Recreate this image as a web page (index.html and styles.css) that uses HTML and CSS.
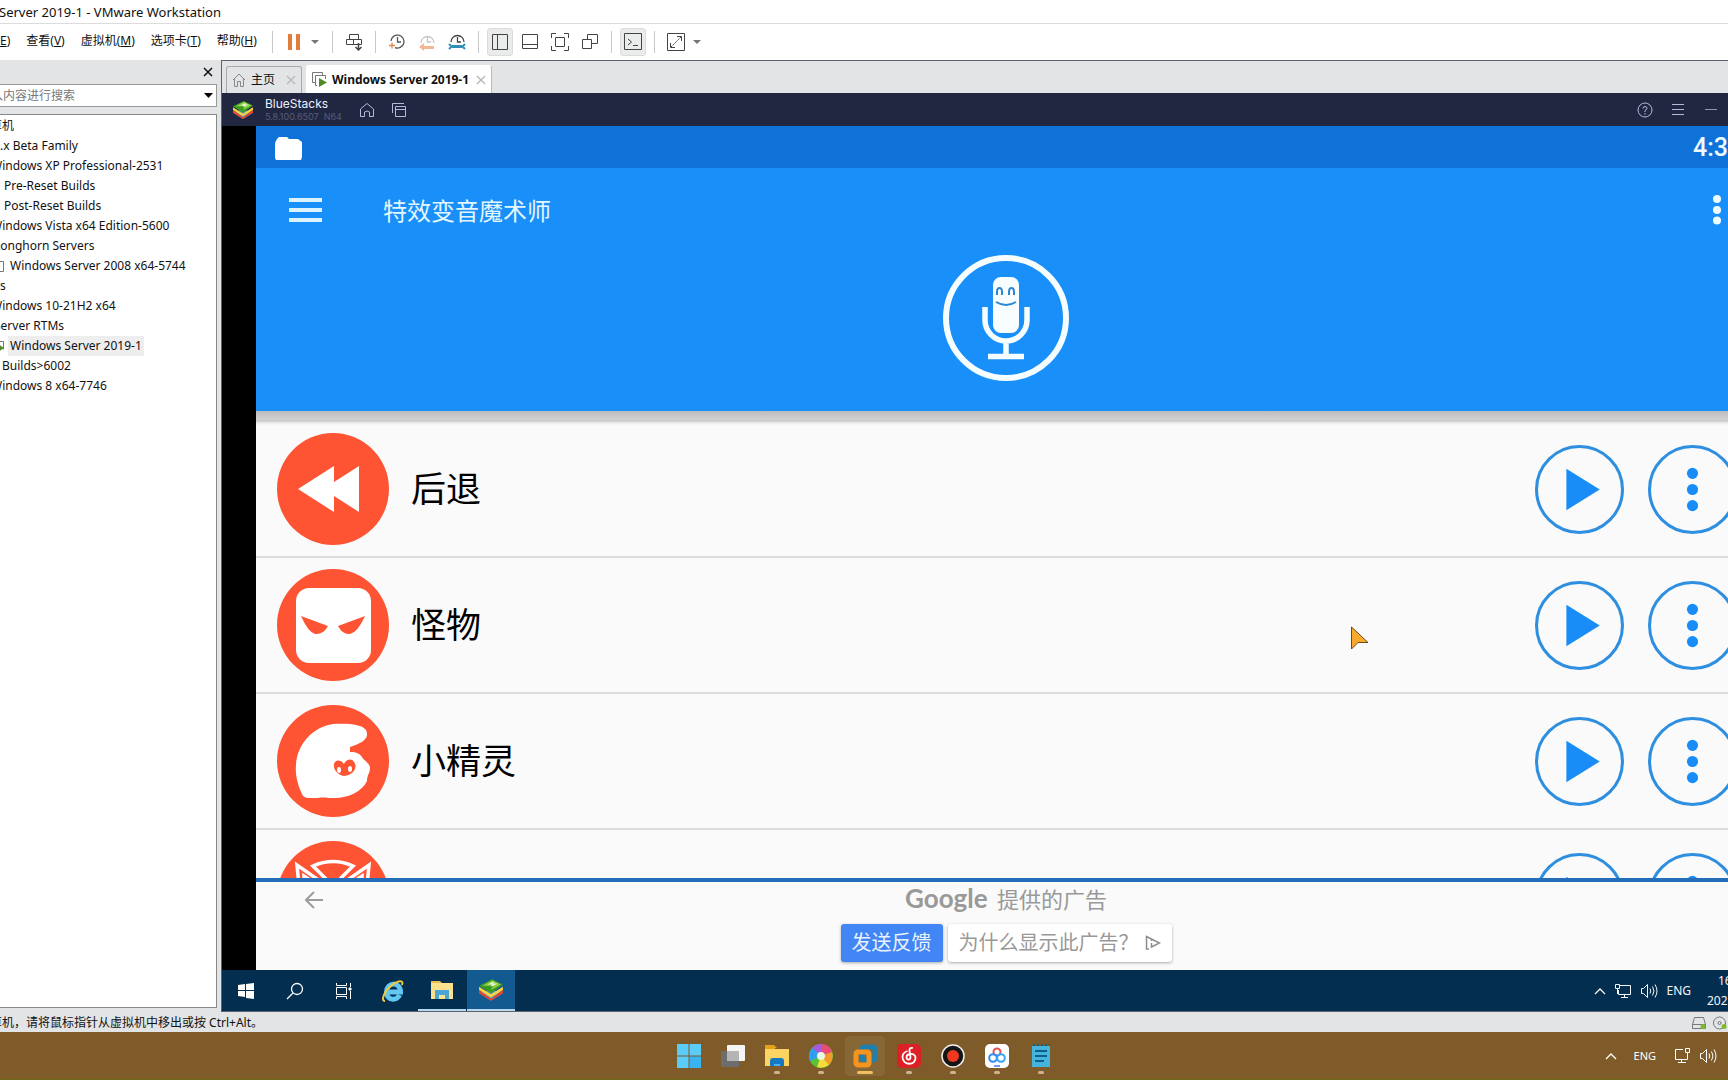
FILE: index.html
```html
<!DOCTYPE html>
<html lang="zh-CN">
<head>
<meta charset="utf-8">
<title>Server 2019-1 - VMware Workstation</title>
<link rel="stylesheet" href="styles.css">
</head>
<body>
<svg class="defs" aria-hidden="true">
  <symbol id="bluestacks" viewBox="0 0 24 22">
    <path fill="#4a9bd0" d="M1 14l11 7 11-7-11-4z"/>
    <path fill="#e8432e" d="M1 11l11 8 11-8v3l-11 7-11-7z"/>
    <path fill="#fbd43c" d="M1 8l11 7 11-7v3l-11 7-11-7z"/>
    <path fill="#3c9a1e" d="M1 7l12-6 10 5-11 8z"/>
    <path fill="#8fd14a" d="M4 7l9-5 8 4-9 5 2-4z"/>
    <path fill="#eaf8d8" d="M9 6l6-3-1 2 4 0-6 3 1-2z"/>
  </symbol>
  <symbol id="play" viewBox="0 0 88 88">
    <circle cx="44" cy="44" r="42.500" fill="none" stroke="#2e8ee0" stroke-width="3"/>
    <path fill="#188df8" d="M31 23.500v41L64 44z"/>
  </symbol>
  <symbol id="more" viewBox="0 0 88 88">
    <circle cx="44" cy="44" r="42.500" fill="none" stroke="#2e8ee0" stroke-width="3"/>
    <g fill="#188df8"><circle cx="44" cy="28" r="5.500"/><circle cx="44" cy="44" r="5.500"/><circle cx="44" cy="60" r="5.500"/></g>
  </symbol>
  <symbol id="speaker" viewBox="0 0 18 18">
    <path fill="none" stroke="currentColor" d="M1.500 6.500h2l4-4v13l-4-4h-2zM10 6.500q1.500 2.500 0 5M12.500 4.500q3 4.500 0 9M15 2.500q4 6.500 0 13"/>
  </symbol>
  <symbol id="net" viewBox="0 0 18 18">
    <path fill="none" stroke="currentColor" d="M6 3.500h10.500v9H4.500V8M10.500 12.500v3M7 15.500h7M1.500 2.500h4v4h-4zM3.500 6.500V12"/>
  </symbol>
  <symbol id="close" viewBox="0 0 10 10"><path stroke="currentColor" stroke-width="1.500" d="M1 1l8 8M9 1L1 9"/></symbol>
</svg>

<div class="desktop">
  <main class="window">
    <header class="titlebar">Server 2019-1 - VMware Workstation</header>

    <nav class="menubar">
      <div class="menus">
        <button><u>E</u>)</button>
        <button>查看(<u>V</u>)</button>
        <button>虚拟机(<u>M</u>)</button>
        <button>选项卡(<u>T</u>)</button>
        <button>帮助(<u>H</u>)</button>
      </div>
      <div class="tools">
        <i class="sep"></i>
        <button class="tool" aria-label="暂停"><svg width="20" height="20"><path fill="#e07c3c" d="M4 2h4v16H4zM12 2h4v16h-4z"/></svg></button>
        <button class="caret" aria-label="电源选项"><svg width="8" height="4"><path fill="#777" d="M0 0h8L4 4z"/></svg></button>
        <i class="sep"></i>
        <button class="tool" aria-label="发送"><svg width="20" height="20" fill="none" stroke="#444"><path d="M5.500 7.500v-5h9v5M2.500 7.500h15v5h-15zM9.500 7.500v5"/><path stroke-width="1.500" d="M14.500 11v7M11.500 15l3 3 3-3"/></svg></button>
        <i class="sep"></i>
        <button class="tool" aria-label="拍摄快照"><svg width="20" height="20" fill="none" stroke="#555" stroke-width="1.300"><path d="M4 9a6.500 6.500 0 1 1 4 6.600M10.500 5v5H14"/><path stroke="#e08a4c" d="M2 13.500h6M5 10.500v6"/></svg></button>
        <button class="tool" aria-label="恢复快照" disabled><svg width="20" height="20" fill="none" stroke="#c8c8c8" stroke-width="1.300"><path d="M4 11a6.500 6.500 0 1 1 13 0M10.500 5v5H14"/><path fill="#f3b793" stroke="none" d="M2 15l5-4v3h10v3H7v2z"/></svg></button>
        <button class="tool" aria-label="管理快照"><svg width="20" height="20" fill="none" stroke="#444" stroke-width="1.300"><path d="M4 10a6.500 6.500 0 1 1 13 0M10.500 5v5H14"/><path stroke="#2e8fb8" stroke-width="3" d="M5 14.500h10"/><path stroke="#2e8fb8" stroke-width="2" d="M2 12l2.500 2.500L2 17M18 12l-2.500 2.500L18 17"/></svg></button>
        <i class="sep"></i>
        <button class="tool on" aria-label="显示库"><svg width="20" height="20" fill="none" stroke="#444"><path d="M2.500 2.500h15v15h-15zM7.500 2.500v15"/></svg></button>
        <button class="tool" aria-label="缩略图栏"><svg width="20" height="20" fill="none" stroke="#444"><path d="M2.500 2.500h15v14h-15zM2.500 12.500h15"/></svg></button>
        <button class="tool" aria-label="全屏"><svg width="20" height="20" fill="none" stroke="#444"><path d="M5.500 5.500h9v9h-9zM1.500 6V1.500H6M14 1.500h4.500V6M18.500 14v4.500H14M6 18.500H1.500V14"/></svg></button>
        <button class="tool" aria-label="Unity"><svg width="20" height="20" fill="none" stroke="#444"><path d="M2.500 7.500h9v9h-9zM7.500 7.500v-5h10v9h-6"/></svg></button>
        <i class="sep"></i>
        <button class="tool on" aria-label="控制台"><svg width="20" height="20" fill="none" stroke="#444"><path d="M1.500 1.500h17v16h-17zM5 7l3.500 3L5 13M10 13.500h5"/></svg></button>
        <i class="sep"></i>
        <button class="tool" aria-label="拉伸"><svg width="20" height="20" fill="none" stroke="#444"><path d="M1.500 1.500h17v17h-17z"/><path stroke-dasharray="2 1" d="M5 15L15 5"/><path d="M11 4.500h4.500V9M4.500 11v4.500H9"/></svg></button>
        <button class="caret" aria-label="拉伸选项"><svg width="8" height="4"><path fill="#777" d="M0 0h8L4 4z"/></svg></button>
      </div>
    </nav>

    <div class="body">
      <aside class="library">
        <div class="library-head"><button aria-label="关闭"><svg width="10" height="10"><use href="#close"/></svg></button></div>
        <div class="search">
          <input type="text" aria-label="搜索" placeholder="入内容进行搜索">
          <button aria-label="展开"><svg width="9" height="5"><path d="M0 0h9L4.500 5z"/></svg></button>
        </div>
        <ul class="tree">
          <li class="l0">算机</li>
          <li class="l3">.x Beta Family</li>
          <li class="l1">Windows XP Professional-2531</li>
          <li class="l4">Pre-Reset Builds</li>
          <li class="l4">Post-Reset Builds</li>
          <li class="l1">Windows Vista x64 Edition-5600</li>
          <li class="l2">Longhorn Servers</li>
          <li class="l2 vm"><svg width="10" height="16" fill="none" stroke="#777"><path d="M0 3.500h9.500v10H0M0 1v3"/></svg><span>Windows Server 2008 x64-5744</span></li>
          <li class="l3">s</li>
          <li class="l1">Windows 10-21H2 x64</li>
          <li class="l2">Server RTMs</li>
          <li class="l2 vm"><svg width="10" height="16" fill="none" stroke="#777"><path d="M0 3.500h9.500v8M0 1v3"/><path fill="#4e8a2a" stroke="none" d="M4 6l6 4-6 4z"/></svg><span class="selected">Windows Server 2019-1</span></li>
          <li class="l5">Builds&gt;6002</li>
          <li class="l1">Windows 8 x64-7746</li>
        </ul>
      </aside>

      <section class="console">
        <div class="tabs">
          <div class="tab">
            <svg width="14" height="14" fill="none" stroke="#888"><path d="M1 7l6-6 6 6M2.500 6v7.500h3v-5h3v5h3V6"/></svg>
            <a href="#">主页</a>
            <button aria-label="关闭标签"><svg width="10" height="10"><use href="#close"/></svg></button>
          </div>
          <div class="tab active">
            <svg width="15" height="15" fill="none" stroke="#777"><path d="M3 10.500H.5V.5h10V3M5 13.500H3.500v-10h10V7"/><path fill="#4e8a2a" stroke="none" d="M7 6l8 4.500L7 15z"/></svg>
            <a href="#">Windows Server 2019-1</a>
            <button aria-label="关闭标签"><svg width="10" height="10"><use href="#close"/></svg></button>
          </div>
        </div>

        <div class="bs-bar">
          <svg class="bs-logo" width="22" height="20"><use href="#bluestacks"/></svg>
          <div class="bs-name"><b>BlueStacks</b><small>5.8.100.6507&nbsp; N64</small></div>
          <button aria-label="主屏幕"><svg width="16" height="16" fill="none" stroke="#b4bade"><path d="M1.500 14.500V7L8 1.500 14.500 7v7.500h-4V10q-2.500-2-5 0v4.500z"/></svg></button>
          <button aria-label="最近"><svg width="16" height="16" fill="none" stroke="#b4bade"><path d="M1.500 11V1.500H13M4.500 4.500h10v10h-10zM4.500 7.500h10"/></svg></button>
          <span class="grow"></span>
          <button aria-label="帮助"><svg width="16" height="16" fill="none" stroke="#b4bade"><circle cx="8" cy="8" r="7"/><path d="M6 6.500q0-2 2-2t2 2q0 1-2 2V10M8 11v1.500"/></svg></button>
          <button aria-label="菜单"><svg width="16" height="16" stroke="#b4bade"><path d="M2 2.500h12M2 7.500h12M2 12.500h12"/></svg></button>
          <button aria-label="最小化"><svg width="16" height="16" stroke="#8f94b5"><path d="M2 7.500h12"/></svg></button>
        </div>

        <div class="stage">
          <div class="android">
            <div class="statusbar">
              <svg width="27" height="23"><path fill="#fff" d="M0 6L2 2 4 0h8l2 2h9l4 3v15l-1 3H1l-1-2z"/></svg>
              <time>4:3</time>
            </div>
            <div class="appbar">
              <div class="appbar-row">
                <button aria-label="导航"><svg width="33" height="25" fill="#dcf3ff"><path d="M0 0h33v4H0zM0 10h33v4H0zM0 20h33v4H0z"/></svg></button>
                <h1>特效变音魔术师</h1>
                <button aria-label="更多"><svg width="8" height="30" fill="#f0fbff"><circle cx="4" cy="4" r="4"/><circle cx="4" cy="15" r="4"/><circle cx="4" cy="25.500" r="4"/></svg></button>
              </div>
              <button class="mic" aria-label="录音">
                <svg width="126" height="126" fill="none" stroke="#f5fdff">
                  <circle cx="63" cy="63" r="60" stroke-width="6"/>
                  <rect x="50" y="22" width="26" height="56" rx="8" fill="#f8feff" stroke="none"/>
                  <path stroke-width="5.500" d="M42 52v13a21 21 0 0 0 42 0V52M63 86v17M45 101.500h36"/>
                  <path stroke="#2e86d2" stroke-width="2" d="M54 40v-3q0-4 2.500-4t2.500 4v3M66 40v-3q0-4 2.500-4t2.500 4v3M53 47q10 6 20 0"/>
                </svg>
              </button>
            </div>
            <ul class="effects">
              <li>
                <svg width="112" height="112"><circle cx="56" cy="56" r="56" fill="#ff5433"/><path fill="#fff" d="M21 56l36-23v16l25-16v46L57 63v16z"/></svg>
                <span>后退</span>
                <button aria-label="播放后退"><svg width="89" height="89"><use href="#play"/></svg></button>
                <button aria-label="后退选项"><svg width="89" height="89"><use href="#more"/></svg></button>
              </li>
              <li>
                <svg width="112" height="112"><circle cx="56" cy="56" r="56" fill="#ff5433"/><rect x="19" y="19" width="75" height="75" rx="13" fill="#fff"/><path fill="#ff5433" d="M24 47l27 10q-5 9-13 8-7-2-14-18zM88 47L61 57q5 9 12 8 8-2 15-18z"/></svg>
                <span>怪物</span>
                <button aria-label="播放怪物"><svg width="89" height="89"><use href="#play"/></svg></button>
                <button aria-label="怪物选项"><svg width="89" height="89"><use href="#more"/></svg></button>
              </li>
              <li>
                <svg width="112" height="112"><circle cx="56" cy="56" r="56" fill="#ff5433"/><path fill="#fff" d="M25 89C21 80 18 71 19 60 20 39 36 22 56 19c14-1 29 0 33 6 4 9-4 13-16 17v5c7 0 10 2 12 5 2 4 8 6 8 11 0 5-3 7-3 13-5 11-21 18-35 17-8 0-9-1-14 0-9 0-14 1-16-4z"/><path fill="#ff5433" d="M67 71c-7-1-11-7-10-12 1-4 6-5 10 0 2-5 8-6 10-2 4 5 0 13-10 14z"/><ellipse cx="62" cy="65" rx="2" ry="3" fill="#fff"/><ellipse cx="73" cy="64" rx="2" ry="3" fill="#fff"/></svg>
                <span>小精灵</span>
                <button aria-label="播放小精灵"><svg width="89" height="89"><use href="#play"/></svg></button>
                <button aria-label="小精灵选项"><svg width="89" height="89"><use href="#more"/></svg></button>
              </li>
              <li>
                <svg width="112" height="112"><circle cx="56" cy="56" r="56" fill="#ff5433"/><path fill="none" stroke="#fff" stroke-width="3.500" d="M36 25q20-9 40 0L60 41h-8zM22 45l-2-21 30 21M90 45l2-21-30 21M27 42v-7l12 8M85 42v-7l-12 8"/></svg>
                <span></span>
                <button aria-label="播放"><svg width="89" height="89"><use href="#play"/></svg></button>
                <button aria-label="选项"><svg width="89" height="89"><use href="#more"/></svg></button>
              </li>
            </ul>
            <div class="ad">
              <button class="ad-back" aria-label="返回"><svg width="18" height="18" fill="none" stroke="#9c9c9c" stroke-width="2"><path d="M18 9H2M9 1L1 9l8 8"/></svg></button>
              <p><b>Google</b> 提供的广告</p>
              <div class="ad-actions">
                <button class="feedback">发送反馈</button>
                <button class="why">为什么显示此广告？<svg width="16" height="16" fill="none" stroke="#8c8c8c" stroke-width="1.500"><path d="M4 14H1.500V1.500L14.500 8 6.500 12V8M6.500 4.500v1.500"/></svg></button>
              </div>
            </div>
          </div>
        </div>

        <div class="guest-bar">
          <button aria-label="开始"><svg width="16" height="16" fill="#fff"><path d="M0 2l7-1v6H0zM8 1l8-1v7H8zM0 8h7v6l-7-1zM8 8h8v8l-8-1z"/></svg></button>
          <button aria-label="搜索"><svg width="18" height="18" fill="none" stroke="#fff" stroke-width="1.300"><circle cx="11" cy="7" r="5.500"/><path d="M7 11l-6 6"/></svg></button>
          <button aria-label="任务视图"><svg width="18" height="18" fill="none" stroke="#fff"><path d="M1.500 5.500h10v7h-10zM1.500 1v2.500h10V1M1.500 17v-2.500h10V17M15.500 1v4M15.500 9v8"/><path fill="#fff" d="M14 6h2v2h-2z"/></svg></button>
          <button aria-label="Internet Explorer"><svg width="24" height="24" fill="none"><path stroke="#62c8f2" stroke-width="5" d="M7 13h12.500c0-11-14-10-14 0 0 9 11 9 13 3"/><path stroke="#f3c73c" stroke-width="2" d="M4 22c-5 0 0-11 7-16S23 1 21 6"/></svg></button>
          <button class="running" aria-label="资源管理器"><svg width="22" height="20"><path fill="#e9bd4e" d="M0 1h9l2 2H0z"/><path fill="#fbe08e" d="M0 3h22v16H0z"/><path fill="#4ba6d8" d="M4 19v-9h14v9h-4v-4H8v4z"/></svg></button>
          <button class="current" aria-label="BlueStacks"><svg width="26" height="24"><use href="#bluestacks"/></svg></button>
          <div class="tray">
            <svg width="12" height="8" fill="none" stroke="currentColor" stroke-width="1.300"><path d="M1 7l5-5 5 5"/></svg>
            <svg width="18" height="18"><use href="#net"/></svg>
            <svg width="18" height="18"><use href="#speaker"/></svg>
            <span>ENG</span>
            <time><span>16</span><span>202</span></time>
          </div>
        </div>
      </section>
    </div>

    <footer class="status">
      <span>算机，请将鼠标指针从虚拟机中移出或按 Ctrl+Alt。</span>
      <svg width="16" height="14" fill="none" stroke="#777"><path d="M3.500 1.500h9l2 7v4h-13v-4zM1.500 8.500h13"/><circle cx="12" cy="10.500" r="2.500" fill="#7dbb2c" stroke="none"/></svg>
      <svg width="16" height="14" fill="none" stroke="#777"><circle cx="7.500" cy="7" r="6"/><circle cx="7.500" cy="7" r="1.500"/><circle cx="12" cy="10.500" r="2.500" fill="#7dbb2c" stroke="none"/></svg>
    </footer>
  </main>

  <nav class="taskbar">
    <div class="pins">
      <button aria-label="开始"><svg width="24" height="24" fill="#5bcbf8"><path d="M0 0h11.500v11.500H0zM12.500 0H24v11.500H12.500zM0 12.500h11.500V24H0z"/><path fill="#38b4f0" d="M12.500 12.500H24V24H12.500z"/></svg></button>
      <button aria-label="任务视图"><svg width="24" height="24"><rect x="6" y="1" width="18" height="16" rx="1" fill="#f5f5f5"/><rect y="7" width="18" height="16" rx="1" fill="#6d6d6d"/><path fill="#b5b5b5" d="M6 7h12v10H6z"/></svg></button>
      <button class="dot" aria-label="文件资源管理器"><svg width="24" height="24"><path fill="#e3a21a" d="M0 1h9l3 3h-2v4H0z"/><path fill="#fcd462" d="M0 5h24v17H0z"/><path fill="#1978c4" d="M5 22v-5q0-3 3-3h8q3 0 3 3v5z"/><path fill="#4bb3ee" d="M9 20h6v2H9z"/></svg></button>
      <button class="dot" aria-label="浏览器"><svg width="24" height="24"><circle cx="12" cy="12" r="12" fill="#5bc236"/><path fill="#a45be0" d="M12 12L3 4Q8-1 14 0z"/><path fill="#ec4b78" d="M12 12L12 0q8 0 11 8z"/><path fill="#f59a28" d="M12 12l11-4q2 7-3 13z"/><path fill="#f5dc3c" d="M12 12l8 9q-6 4-12 2z"/><path fill="#2f9df0" d="M12 12L3 4q-5 6-2 13z"/><circle cx="12" cy="12" r="4" fill="#e8fbe2"/></svg></button>
      <button class="dot here" aria-label="VMware"><svg width="24" height="24" fill="none" stroke-width="5"><rect x="9" y="3" width="13" height="13" rx="2" stroke="#1f7fae"/><rect x="3" y="8" width="13" height="13" rx="2" stroke="#f5941e"/></svg></button>
      <button class="dot" aria-label="网易云音乐"><svg width="24" height="24" fill="none"><rect width="24" height="24" rx="5" fill="#dd1f26"/><path stroke="#fff" stroke-width="1.800" d="M16 4q-4-1-3.500 3l1 6c0 4-4 3-4 0s7-5 9 0c1 9-13 9-13 0 0-3 2-5 5-6"/></svg></button>
      <button class="dot" aria-label="录屏"><svg width="24" height="24"><circle cx="12" cy="12" r="11" fill="#151515" stroke="#eee" stroke-width="1.500"/><circle cx="12" cy="12" r="6" fill="#f0391f"/></svg></button>
      <button class="dot" aria-label="网盘"><svg width="24" height="24" fill="none" stroke-width="2"><rect width="24" height="24" rx="5" fill="#fff"/><circle cx="12" cy="8" r="3.500" stroke="#e4504e"/><circle cx="8" cy="14" r="3.800" stroke="#2e8df5"/><circle cx="16" cy="14" r="3.800" stroke="#38a3f5"/><path stroke="#3f7de8" stroke-width="1.500" d="M9 22h6"/></svg></button>
      <button class="dot" aria-label="记事本"><svg width="20" height="24"><path fill="#44b4dc" d="M1 2h18v21H1z"/><path fill="#0e5f83" d="M4 6h12v2H4zM4 11h12v2H4zM4 16h9v2H4z"/><path stroke="#155e80" stroke-width="2" stroke-dasharray="2 2" d="M2 1h17"/></svg></button>
    </div>
    <div class="host-tray">
      <svg width="12" height="8" fill="none" stroke="currentColor" stroke-width="1.300"><path d="M1 7l5-5 5 5"/></svg>
      <span>ENG</span>
      <svg width="18" height="18" fill="none" stroke="currentColor"><path d="M10 2.500H2.500v10h12V9M8.500 12.500v3M5 15.500h8M12.500 1.500h4v4h-4zM14.500 5.500V9"/></svg>
      <svg width="18" height="18"><use href="#speaker"/></svg>
    </div>
  </nav>

  <svg class="pointer" width="18" height="24"><path fill="#fba92c" stroke="#6b4a1c" d="M.5 1v22L7 16.500h10z"/></svg>
</div>
</body>
</html>
```

FILE: styles.css
```css
* { box-sizing: border-box; }

body {
  margin: 0;
  font-family: "Noto Sans", "Noto Sans CJK SC", sans-serif;
  font-size: 12px;
  line-height: 20px;
  color: #111;
}

button {
  padding: 0;
  border: 0;
  background: none;
  font: inherit;
  color: inherit;
}

svg { display: block; flex: none; }
ul { margin: 0; padding: 0; list-style: none; }
.defs { position: absolute; width: 0; height: 0; }

.desktop {
  position: relative;
  display: flex;
  flex-direction: column;
  height: 100vh;
  overflow: hidden;
}

/* The window is slightly larger than the screen on both sides */
.window {
  flex: 1;
  min-height: 0;
  display: flex;
  flex-direction: column;
  margin: 0 -28px 0 -12px;
  background: #fff;
}

.titlebar {
  height: 24px;
  padding: 2px 11px;
  border-bottom: 1px solid #dcdcdc;
  font-size: 13px;
}

/* Menu and toolbar */
.menubar {
  display: flex;
  align-items: center;
  height: 36px;
  padding-left: 12px;
}
.menus { display: flex; gap: 16px; width: 272px; padding-bottom: 3px; white-space: nowrap; }
.tools { display: flex; align-items: center; gap: 4px; margin-left: -4px; padding-bottom: 1px; }
.sep { width: 1px; height: 22px; margin: 0 4px; background: #c8c8c8; }
.tool {
  display: grid;
  place-items: center;
  width: 26px;
  height: 28px;
  border-radius: 3px;
}
.tool.on { background: #eaebeb; border: 1px solid #dcdcdc; }
.caret { margin-right: 5px; }

.body { flex: 1; min-height: 0; display: flex; }

/* Library */
.library {
  display: flex;
  flex-direction: column;
  width: 233px;
  padding: 0 4px 4px 0;
  background: #e2e4e6;
}
.library-head {
  display: flex;
  align-items: center;
  justify-content: flex-end;
  height: 24px;
  padding-right: 4px;
}
.search {
  display: flex;
  align-items: center;
  height: 23px;
  margin-bottom: 7px;
  padding-right: 3px;
  border: 1px solid #999;
  border-left: 0;
  background: #fff;
}
.search input {
  flex: 1;
  min-width: 0;
  padding: 0 0 0 3px;
  border: 0;
  outline: 0;
  font: inherit;
}
.search input::placeholder { color: #777; }
.tree {
  flex: 1;
  padding-top: 1px;
  border: 1px solid #888;
  border-left: 0;
  background: #fff;
  white-space: nowrap;
}
.l0 { padding-left: 2px; }
.l1 { padding-left: 3px; }
.l2 { padding-left: 6px; }
.l3 { padding-left: 12px; }
.l4 { padding-left: 16px; }
.l5 { padding-left: 14px; }
.vm { display: flex; align-items: center; gap: 4px; }
.vm span { padding: 0 2px; }
.vm .selected { background: #eee; }

/* Console */
.console {
  flex: 1;
  min-width: 0;
  display: flex;
  flex-direction: column;
  border: solid #5c6270;
  border-width: 1px 0 1px 1px;
}
.tabs {
  display: flex;
  align-items: flex-end;
  gap: 4px;
  height: 32px;
  padding-left: 4px;
  background: #e2e4e6;
}
.tab {
  display: flex;
  align-items: center;
  gap: 5px;
  height: 27px;
  padding: 0 5px;
  border: 1px solid #aaa;
  border-bottom: 0;
  border-radius: 3px 3px 0 0;
}
.tab a { color: inherit; text-decoration: none; }
.tab button { margin-left: 6px; color: #bbb; }
.tab.active { height: 28px; background: #fff; border-color: #fff #bbb #fff #fff; font-weight: bold; }
.tab.active button { margin-left: 2px; }

.bs-bar {
  display: flex;
  align-items: center;
  gap: 16px;
  height: 33px;
  padding: 0 37px 0 10px;
  background: #222741;
  font-family: Inter, sans-serif;
}
.bs-logo { margin-right: -5px; }
.bs-name { display: flex; flex-direction: column; width: 78px; padding-top: 1px; white-space: nowrap; }
.bs-name b { font-weight: normal; line-height: 14px; color: #eef0ff; }
.bs-name small { font-size: 9px; line-height: 12px; color: #555b7a; }
.grow { flex: 1; }
.bs-bar .grow ~ button { margin-left: 1px; }

.stage { flex: 1; min-height: 0; display: flex; padding-left: 34px; background: #000; }
.android {
  flex: 1;
  min-width: 0;
  display: flex;
  flex-direction: column;
  background: #fafafa;
  font-family: Roboto, "Noto Sans CJK SC", sans-serif;
}
.statusbar {
  display: flex;
  align-items: center;
  justify-content: space-between;
  height: 42px;
  padding: 2px 28px 0 19px;
  background: #0f72d9;
  color: #f0fbff;
  font-size: 25px;
  font-weight: 500;
}
.appbar {
  display: flex;
  flex-direction: column;
  align-items: center;
  height: 243px;
  background: #188ff9;
}
.appbar-row {
  display: flex;
  align-items: center;
  align-self: stretch;
  height: 84px;
  padding: 0 35px 0 33px;
}
.appbar h1 {
  flex: 1;
  margin: 0 0 0 61px;
  padding-top: 3px;
  color: #e4f6ff;
  font-size: 24px;
  font-weight: normal;
  line-height: 32px;
}
.mic { margin-top: 3px; }

.effects {
  flex: 1;
  min-height: 0;
  overflow: hidden;
  padding-top: 11px;
  background: linear-gradient(#bdbdbd, #d2d2d2 9px, #c4c4c4 10px, #e4e4e4 11px, #fafafa 14px);
}
.effects li {
  display: flex;
  align-items: center;
  gap: 24px;
  height: 136px;
  padding: 0 19px 0 21px;
  border-bottom: 2px solid #dcdcdc;
}
.effects span { flex: 1; margin-left: -2px; padding-top: 4px; font-size: 35px; line-height: 48px; color: #000; }

.ad {
  display: grid;
  grid-template-columns: 1fr auto 1fr;
  align-content: start;
  height: 92px;
  border-top: 4px solid #246db9;
  color: #999;
}
.ad-back { justify-self: start; margin-left: 49px; }
.ad p { margin: 0; font-size: 22px; line-height: 34px; }
.ad p b { margin-right: 4px; font-family: Lato, sans-serif; font-size: 26px; line-height: 32px; }
.ad-actions { grid-column: 1 / -1; justify-self: center; display: flex; gap: 5px; margin-top: 6px; }
.ad-actions button {
  display: flex;
  align-items: center;
  height: 38px;
  padding: 0 11px;
  border-radius: 3px;
  box-shadow: 0 1px 3px #aaa;
  font-size: 20px;
}
.ad-actions .feedback { background: #4285f4; color: #e8f3ff; }
.ad-actions .why { gap: 6px; background: #fff; }

/* Guest taskbar */
.guest-bar { display: flex; gap: 1px; height: 41px; background: #032e4f; color: #f5f5f5; }
.guest-bar button { display: grid; place-items: center; width: 48px; }
.guest-bar .running { border-bottom: 2px solid #b8d8ee; background-clip: padding-box; }
.guest-bar .current { border-bottom: 2px solid #b8d8ee; background: #135a90; }
.tray { display: flex; align-items: center; gap: 8px; margin-left: auto; }
.tray time { display: flex; flex-direction: column; width: 49px; margin-left: 8px; }
.tray time span:first-child { padding-left: 11px; }

/* Status line */
.status {
  display: flex;
  align-items: center;
  gap: 5px;
  height: 20px;
  padding: 2px 28px 0 2px;
  background: #e2e4e6;
}
.status span { flex: 1; }

/* Host taskbar */
.taskbar {
  display: grid;
  grid-template-columns: 1fr auto 1fr;
  height: 48px;
  padding-left: 2px;
  background: #7e5b29;
  border-bottom: 1px solid #6b6a16;
}
.pins { grid-column: 2; display: flex; align-items: center; gap: 4px; }
.pins button {
  display: grid;
  justify-items: center;
  align-content: start;
  gap: 3px;
  width: 40px;
  height: 40px;
  padding-top: 8px;
  border-radius: 4px;
}
.pins .here { background: #886737; }
.dot::after { content: ""; width: 6px; height: 3px; border-radius: 2px; background: #cdb491; }
.dot.here::after { width: 16px; background: #f0c060; }
.host-tray {
  display: flex;
  align-items: center;
  justify-content: flex-end;
  gap: 8px;
  padding-right: 11px;
  color: #fff;
}
.host-tray span { margin: 0 9px; font-size: 11px; }

.pointer { position: absolute; left: 1351px; top: 626px; }
```
